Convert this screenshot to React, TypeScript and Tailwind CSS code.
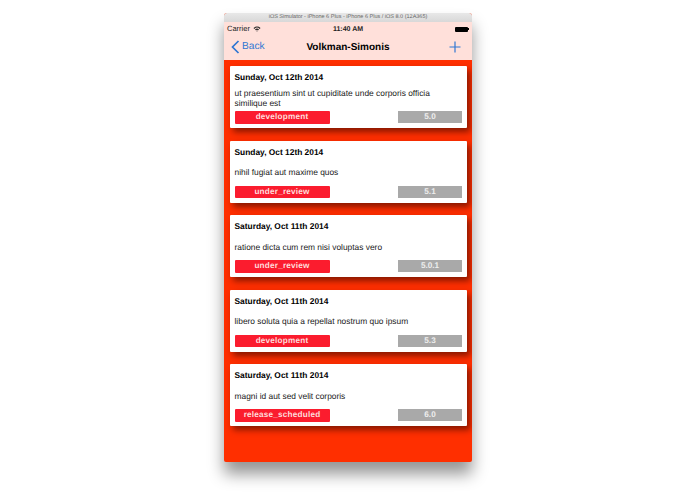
const tickets = [
  {
    date: "Sunday, Oct 12th 2014",
    text: "ut praesentium sint ut cupiditate unde corporis officia similique est",
    status: "development",
    version: "5.0",
  },
  {
    date: "Sunday, Oct 12th 2014",
    text: "nihil fugiat aut maxime quos",
    status: "under_review",
    version: "5.1",
  },
  {
    date: "Saturday, Oct 11th 2014",
    text: "ratione dicta cum rem nisi voluptas vero",
    status: "under_review",
    version: "5.0.1",
  },
  {
    date: "Saturday, Oct 11th 2014",
    text: "libero soluta quia a repellat nostrum quo ipsum",
    status: "development",
    version: "5.3",
  },
  {
    date: "Saturday, Oct 11th 2014",
    text: "magni id aut sed velit corporis",
    status: "release_scheduled",
    version: "6.0",
  },
];

const App = () => {
  return (
    <div className="w-[695px] h-[494px] overflow-hidden bg-white pt-[13px] font-['Liberation_Sans',Arial,sans-serif] [text-rendering:geometricPrecision]">
      <div className="ml-[224px] w-[248px] h-[449px] rounded-t-[3px] rounded-b-[2px] overflow-hidden shadow-[0_12px_16px_rgba(0,0,0,0.42)] bg-[#ff2f00] flex flex-col">
        {/* Simulator title bar */}
        <div className="h-[9px] pt-[1px] shrink-0 bg-gradient-to-b from-[#e8e8e8] to-[#d8d8d8] flex items-center justify-center text-[5.5px] leading-none text-[#666]">
          iOS Simulator - iPhone 6 Plus - iPhone 6 Plus / iOS 8.0 (12A365)
        </div>

        {/* Status + nav */}
        <div className="h-[38px] shrink-0 bg-[#ffe0da] flex flex-col">
          <div className="relative h-[10px] mt-[2px] flex items-center justify-between px-[3px] text-[7.5px] leading-none text-[#222]">
            <div className="flex items-center gap-[3px]">
              <span>Carrier</span>
              <svg width="8" height="6" viewBox="0 0 8 6">
                <path d="M0.5 2 A5 5 0 0 1 7.5 2 L6.7 2.9 A3.8 3.8 0 0 0 1.3 2.9 Z" fill="#222" />
                <path d="M2 3.4 A3 3 0 0 1 6 3.4 L5.2 4.2 A2 2 0 0 0 2.8 4.2 Z" fill="#222" />
                <path d="M3.3 4.8 A1 1 0 0 1 4.7 4.8 L4 5.7 Z" fill="#222" />
              </svg>
            </div>
            <span className="absolute left-0 right-0 text-center font-bold text-[7px]">11:40 AM</span>
            <div className="flex items-center">
              <div className="w-[13px] h-[5px] bg-black rounded-[1px]" />
              <div className="w-[1px] h-[2px] bg-black" />
            </div>
          </div>
          <div className="relative flex-1 flex items-center justify-between pl-[7px] pr-[11px]">
            <div className="flex items-center gap-[2px] text-[#2f76d2] text-[10.2px] leading-none">
              <svg width="9" height="14" viewBox="0 0 9 14" fill="none">
                <path d="M7.5 1 L1.5 7 L7.5 13" stroke="#2f76d2" strokeWidth="1.7" />
              </svg>
              <span>Back</span>
            </div>
            <span className="absolute left-0 right-0 mt-[2px] text-center text-[10px] font-bold text-black leading-none">
              Volkman-Simonis
            </span>
            <svg width="12" height="12" viewBox="0 0 12 12" fill="none">
              <path d="M6 0.5 V11.5 M0.5 6 H11.5" stroke="#2f76d2" strokeWidth="1.2" />
            </svg>
          </div>
        </div>

        {/* Tickets */}
        <div className="pt-[6px] pl-[6px] pr-[5px] flex flex-col gap-[12.5px]">
          {tickets.map((ticket, index) => (
            <div
              key={index}
              className="h-[62px] bg-white rounded-[1px] shadow-[3px_4px_6px_rgba(70,10,0,0.65)] pl-[4.5px] pr-[5px] flex flex-col"
            >
              <p className="mt-[6px] text-[8.4px] leading-[10px] font-bold text-black">{ticket.date}</p>
              <div className="h-[22px] mt-[4.5px] flex items-center">
                <p className="text-[8.4px] leading-[10px] text-[#222]">{ticket.text}</p>
              </div>
              <div className="mt-[2.5px] flex items-center justify-between">
                <div className="w-[95px] h-[12.5px] bg-[#fb1c2e] rounded-[1px] flex items-center justify-center text-[8.2px] font-bold leading-none text-[#ffdcdc] tracking-[0.2px]">
                  {ticket.status}
                </div>
                <div className="w-[64px] h-[12px] bg-[#a9a9a9] flex items-center justify-center text-[8.2px] font-bold leading-none text-[#eee]">
                  {ticket.version}
                </div>
              </div>
            </div>
          ))}
        </div>
      </div>
    </div>
  );
};

export default App;
